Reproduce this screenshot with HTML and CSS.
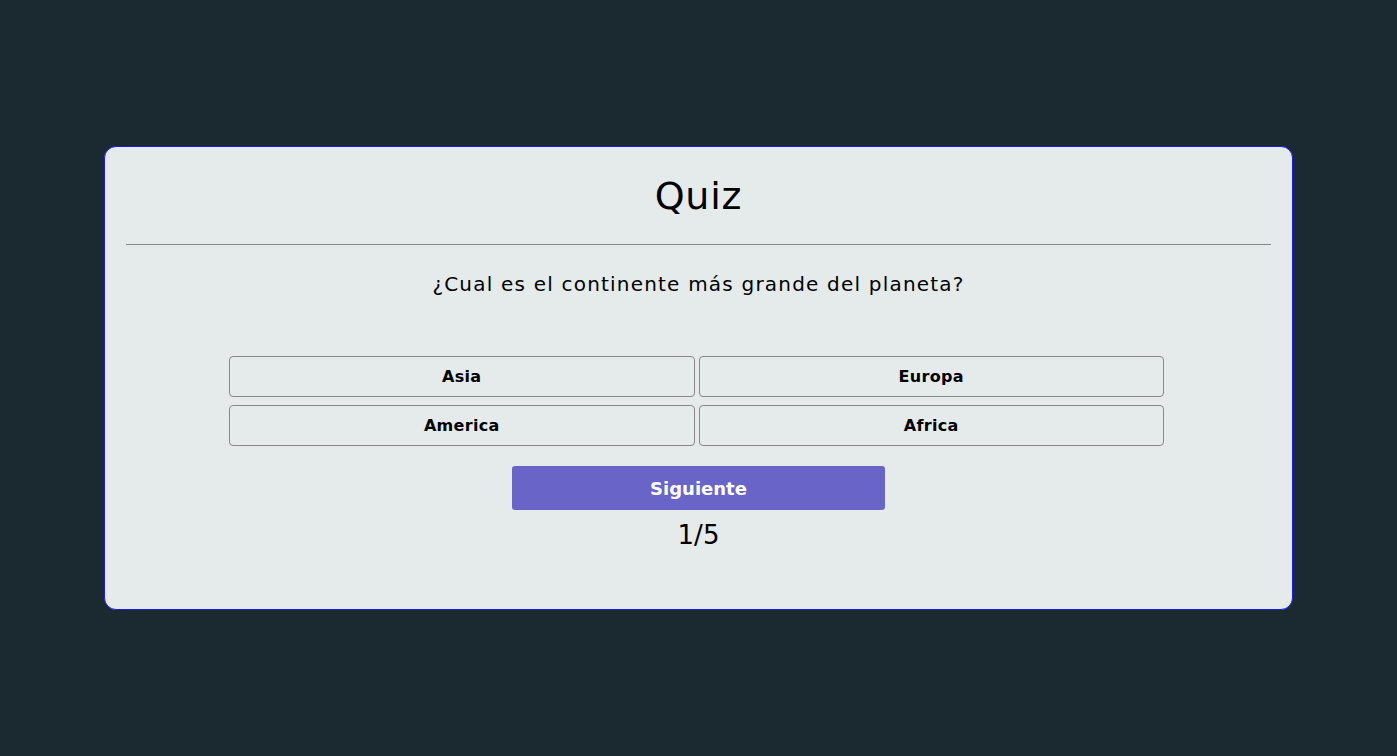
FILE: index.html
```html
<!DOCTYPE html>
<html lang="es">
<head>
<meta charset="utf-8">
<title>Quiz</title>
<link rel="stylesheet" href="styles.css">
</head>
<body>
<main class="card">
  <h1 class="title">Quiz</h1>
  <hr class="divider">
  <p class="question">¿Cual es el continente más grande del planeta?</p>
  <div class="answers">
    <button class="answer">Asia</button>
    <button class="answer">Europa</button>
    <button class="answer">America</button>
    <button class="answer">Africa</button>
  </div>
  <button class="next">Siguiente</button>
  <p class="progress">1/5</p>
</main>
</body>
</html>
```
FILE: styles.css
```css
html, body {
  margin: 0;
  height: 100%;
}
body {
  background: #1b2a30;
  display: flex;
  align-items: center;
  justify-content: center;
  font-family: "DejaVu Sans", Inter, sans-serif;
  color: #000;
}
.card {
  box-sizing: border-box;
  width: 1189px;
  height: 464px;
  background: #e5ebeb;
  border: 1px solid #1a1aff;
  border-radius: 12px;
  padding: 20px;
  display: flex;
  flex-direction: column;
  align-items: center;
}
.title {
  margin: 0;
  font-size: 38px;
  font-weight: 400;
  line-height: 58px;
  letter-spacing: 0.8px;
}
.divider {
  align-self: stretch;
  margin: 19px 1px 0;
  border: 0;
  height: 1px;
  background: #888;
}
.question {
  margin: 24px 0 0;
  font-size: 20px;
  line-height: 30px;
  letter-spacing: 1.2px;
}
.answers {
  margin: 57px 4px 0 0;
  width: 935px;
  display: grid;
  grid-template-columns: 1fr 1fr;
  gap: 8px 4px;
}
.answer {
  height: 41px;
  background: transparent;
  border: 1px solid #888;
  border-radius: 4px;
  font-family: inherit;
  font-size: 16px;
  font-weight: 700;
  letter-spacing: 0.3px;
  color: #000;
}
.next {
  margin-top: 20px;
  width: 373px;
  height: 44px;
  background: #6864c8;
  color: #fff;
  border: 0;
  border-radius: 3px;
  font-family: inherit;
  font-size: 18px;
  font-weight: 700;
}
.progress {
  margin: 8px 0 0;
  font-size: 26px;
  line-height: 34px;
}
```
